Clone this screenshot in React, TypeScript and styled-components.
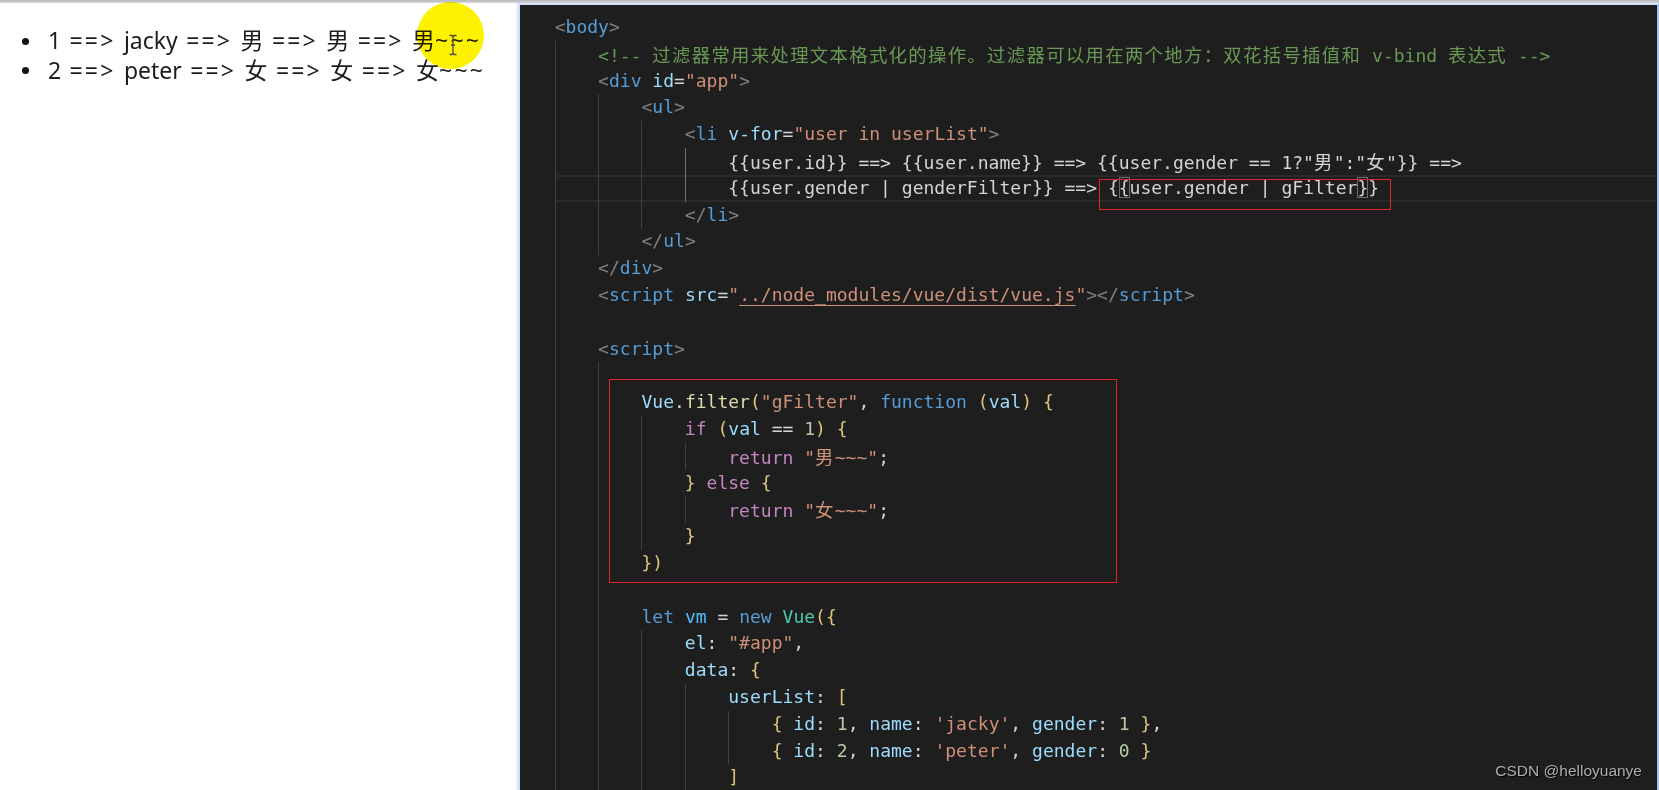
import React from 'react';
import styled, { createGlobalStyle } from 'styled-components';

const Global = createGlobalStyle`
  html, body { margin: 0; padding: 0; background: #ffffff; }
  body { width: 1659px; height: 790px; overflow: hidden; }
  #root { width: 1659px; height: 790px; }
`;

const Screen = styled.div`
  width: 1659px;
  height: 790px;
  display: flex;
  flex-direction: column;
  position: relative;
  overflow: hidden;
`;

const TopStrip = styled.div`
  flex: none;
  height: 3px;
  background: linear-gradient(#b8b8b8, #d4d9e0);
`;

const Main = styled.div`
  flex: 1;
  display: flex;
  min-height: 0;
`;

const Browser = styled.div`
  flex: none;
  width: 515px;
  box-sizing: border-box;
  padding-top: 23.3px;
  background: #ffffff;
  position: relative;
`;

const List = styled.ul`
  margin: 0;
  padding: 0 0 0 21.5px;
  list-style: none;
  font-family: "Noto Sans", "Noto Sans CJK SC", sans-serif;
  font-size: 23px;
  line-height: 29.6px;
  color: #1c1c1c;
  word-spacing: 2.35px;
`;

const Item = styled.li`
  display: flex;
  align-items: center;
  gap: 19.5px;
  white-space: pre;
`;

const Bullet = styled.span`
  flex: none;
  width: 7px;
  height: 7px;
  border-radius: 50%;
  background: #111111;
`;

const Spread = styled.span`
  letter-spacing: 2.2px;
`;

const Highlight = styled.div`
  position: absolute;
  left: 417px;
  top: -1px;
  width: 67px;
  height: 67px;
  border-radius: 50%;
  background: #fff200;
  mix-blend-mode: multiply;
  pointer-events: none;
`;

const Caret = styled.svg`
  position: absolute;
  left: 448px;
  top: 31px;
`;

const Glow = styled.div`
  flex: none;
  width: 5px;
  background: linear-gradient(90deg, #ffffff, #c3dbf8);
`;

const Editor = styled.div`
  flex: 1;
  display: flex;
  background: #1e1e1e;
  border-top: 2px solid #d3e2f5;
  border-right: 2px solid #9dc2ee;
  min-width: 0;
`;

const Gutter = styled.div`
  flex: none;
  width: 34.7px;
`;

const Code = styled.div`
  flex: 1;
  padding-top: 9px;
  font-family: "DejaVu Sans Mono", "Noto Sans CJK SC", monospace;
  font-size: 18.02px;
  line-height: 26.8px;
  color: #d4d4d4;
  white-space: pre;
`;

const Row = styled.div<{ $current?: boolean }>`
  display: flex;
  height: 26.8px;
  box-shadow: ${(p) => (p.$current ? 'inset 0 2px #2a2a2a, inset 0 -2px #2a2a2a' : 'none')};
`;

const Guide = styled.span<{ $active?: boolean }>`
  flex: none;
  width: 43.4px;
  box-sizing: border-box;
  border-left: 1px solid ${(p) => (p.$active ? '#707070' : '#404040')};
`;

const Content = styled.span`
  display: block;
  white-space: pre;
`;

const palette = {
  punc: '#808080',
  tag: '#569cd6',
  attr: '#9cdcfe',
  str: '#ce9178',
  cmt: '#6a9955',
  txt: '#d4d4d4',
  kw: '#569cd6',
  ctrl: '#c586c0',
  fn: '#dcdcaa',
  cls: '#4ec9b0',
  num: '#b5cea8',
  v: '#9cdcfe',
  vc: '#4fc1ff',
  br: '#dcc47c',
};
type Kind = keyof typeof palette;

const Tok = styled.span<{ $k: Kind }>`
  color: ${(p) => palette[p.$k]};
`;

const Link = styled.span`
  color: #ce9178;
  text-decoration: underline;
  text-decoration-color: #ce9178;
  text-underline-offset: 4px;
`;

const Wide = styled.span`
  font-family: "Noto Sans CJK SC", sans-serif;
  font-size: 18.4px;
  letter-spacing: 1.3px;
`;

const Marked = styled.span`
  position: relative;
  display: inline-block;
  height: 26.8px;
  vertical-align: top;
  &::after {
    content: '';
    position: absolute;
    left: -9px;
    right: -12px;
    top: 4.7px;
    bottom: -8px;
    border: 1px solid #e3242b;
    pointer-events: none;
  }
`;

const Match = styled.span`
  outline: 1px solid #6c6c6c;
  outline-offset: -1px;
`;

const FilterBlock = styled.div`
  position: relative;
  &::after {
    content: '';
    position: absolute;
    left: 54.3px;
    width: 506px;
    top: -10px;
    bottom: -6px;
    border: 1px solid #e3242b;
    pointer-events: none;
  }
`;

const Watermark = styled.div`
  position: absolute;
  right: 17px;
  bottom: 10px;
  font-family: "Liberation Sans", Arial, sans-serif;
  font-size: 15.5px;
  line-height: 18px;
  color: #aeaeae;
  text-shadow: 1px 1px 1px #000000;
`;

type LineProps = {
  indent: number;
  guides?: number;
  active?: number;
  current?: boolean;
  children?: React.ReactNode;
};

function Line({ indent, guides, active, current, children }: LineProps) {
  const n = guides ?? indent;
  return (
    <Row $current={current}>
      {Array.from({ length: n }, (_, g) => (
        <Guide key={g} $active={g === active} />
      ))}
      <Content>{children}</Content>
    </Row>
  );
}

const T = ({ k, children }: { k: Kind; children: React.ReactNode }) => <Tok $k={k}>{children}</Tok>;

function Open({ name, children }: { name: string; children?: React.ReactNode }) {
  return (
    <>
      <T k="punc">{'<'}</T>
      <T k="tag">{name}</T>
      {children}
      <T k="punc">{'>'}</T>
    </>
  );
}

function Close({ name }: { name: string }) {
  return (
    <>
      <T k="punc">{'</'}</T>
      <T k="tag">{name}</T>
      <T k="punc">{'>'}</T>
    </>
  );
}

export default function App() {
  return (
    <Screen>
      <Global />
      <TopStrip />
      <Main>
        <Browser>
          <List>
            <Item>
              <Bullet />
              <span>
                1 <Spread>==&gt;</Spread> jacky <Spread>==&gt;</Spread> 男 <Spread>==&gt;</Spread> 男{' '}
                <Spread>==&gt;</Spread> 男<Spread>~~~</Spread>
              </span>
            </Item>
            <Item>
              <Bullet />
              <span>
                2 <Spread>==&gt;</Spread> peter <Spread>==&gt;</Spread> 女 <Spread>==&gt;</Spread> 女{' '}
                <Spread>==&gt;</Spread> 女<Spread>~~~</Spread>
              </span>
            </Item>
          </List>
          <Highlight />
          <Caret width="10" height="22" viewBox="0 0 10 22">
            <path d="M1.5 1.5h2.5l1 1 1-1h2.5M5 2.5v17M1.5 20.5h2.5l1-1 1 1h2.5M3 11h4" stroke="#4a4a4a" strokeWidth="1.3" fill="none" />
          </Caret>
        </Browser>
        <Glow />
        <Editor>
          <Gutter />
          <Code>
            <Line indent={0}>
              <Open name="body" />
            </Line>
            <Line indent={1}>
              <T k="cmt">
                {'<!-- '}
                <Wide>过滤器常用来处理文本格式化的操作。过滤器可以用在两个地方：双花括号插值和</Wide>
                {' v-bind '}
                <Wide>表达式</Wide>
                {' -->'}
              </T>
            </Line>
            <Line indent={1}>
              <Open name="div">
                {' '}
                <T k="attr">id</T>
                <T k="txt">=</T>
                <T k="str">"app"</T>
              </Open>
            </Line>
            <Line indent={2}>
              <Open name="ul" />
            </Line>
            <Line indent={3}>
              <Open name="li">
                {' '}
                <T k="attr">v-for</T>
                <T k="txt">=</T>
                <T k="str">"user in userList"</T>
              </Open>
            </Line>
            <Line indent={4} active={3}>
              {'{{user.id}} ==> {{user.name}} ==> {{user.gender == 1?"'}
              <Wide>男</Wide>
              {'":"'}
              <Wide>女</Wide>
              {'"}} ==>'}
            </Line>
            <Line indent={4} active={3} current>
              {'{{user.gender | genderFilter}} ==> '}
              <Marked>
                {'{'}
                <Match>{'{'}</Match>
                {'user.gender | gFilter'}
                <Match>{'}'}</Match>
                {'}'}
              </Marked>
            </Line>
            <Line indent={3}>
              <Close name="li" />
            </Line>
            <Line indent={2}>
              <Close name="ul" />
            </Line>
            <Line indent={1}>
              <Close name="div" />
            </Line>
            <Line indent={1}>
              <Open name="script">
                {' '}
                <T k="attr">src</T>
                <T k="txt">=</T>
                <T k="str">"</T>
                <Link>../node_modules/vue/dist/vue.js</Link>
                <T k="str">"</T>
              </Open>
              <Close name="script" />
            </Line>
            <Line indent={1} guides={1} />
            <Line indent={1}>
              <Open name="script" />
            </Line>
            <Line indent={2} guides={2} />
            <FilterBlock>
              <Line indent={2}>
                <T k="v">Vue</T>.<T k="fn">filter</T>
                <T k="br">(</T>
                <T k="str">"gFilter"</T>, <T k="kw">function</T> <T k="br">(</T>
                <T k="v">val</T>
                <T k="br">)</T> <T k="br">{'{'}</T>
              </Line>
              <Line indent={3}>
                <T k="ctrl">if</T> <T k="br">(</T>
                <T k="v">val</T> == <T k="num">1</T>
                <T k="br">)</T> <T k="br">{'{'}</T>
              </Line>
              <Line indent={4}>
                <T k="ctrl">return</T>{' '}
                <T k="str">
                  "<Wide>男</Wide>~~~"
                </T>
                ;
              </Line>
              <Line indent={3}>
                <T k="br">{'}'}</T> <T k="ctrl">else</T> <T k="br">{'{'}</T>
              </Line>
              <Line indent={4}>
                <T k="ctrl">return</T>{' '}
                <T k="str">
                  "<Wide>女</Wide>~~~"
                </T>
                ;
              </Line>
              <Line indent={3}>
                <T k="br">{'}'}</T>
              </Line>
              <Line indent={2}>
                <T k="br">{'}'}</T>
                <T k="br">)</T>
              </Line>
            </FilterBlock>
            <Line indent={2} guides={2} />
            <Line indent={2}>
              <T k="kw">let</T> <T k="vc">vm</T> = <T k="kw">new</T> <T k="cls">Vue</T>
              <T k="br">(</T>
              <T k="br">{'{'}</T>
            </Line>
            <Line indent={3}>
              <T k="v">el</T>: <T k="str">"#app"</T>,
            </Line>
            <Line indent={3}>
              <T k="v">data</T>: <T k="br">{'{'}</T>
            </Line>
            <Line indent={4}>
              <T k="v">userList</T>: <T k="br">[</T>
            </Line>
            <Line indent={5}>
              <T k="br">{'{'}</T> <T k="v">id</T>: <T k="num">1</T>, <T k="v">name</T>: <T k="str">'jacky'</T>,{' '}
              <T k="v">gender</T>: <T k="num">1</T> <T k="br">{'}'}</T>,
            </Line>
            <Line indent={5}>
              <T k="br">{'{'}</T> <T k="v">id</T>: <T k="num">2</T>, <T k="v">name</T>: <T k="str">'peter'</T>,{' '}
              <T k="v">gender</T>: <T k="num">0</T> <T k="br">{'}'}</T>
            </Line>
            <Line indent={4}>
              <T k="br">]</T>
            </Line>
          </Code>
        </Editor>
      </Main>
      <Watermark>CSDN @helloyuanye</Watermark>
    </Screen>
  );
}
